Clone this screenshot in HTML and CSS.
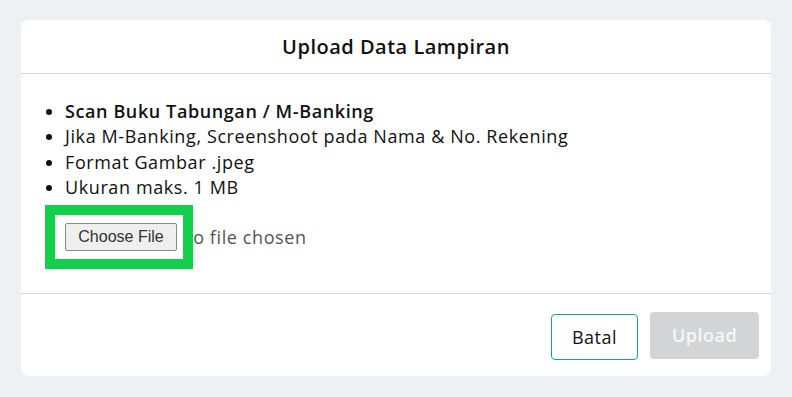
FILE: index.html
```html
<!DOCTYPE html>
<html lang="en">
<head>
    <meta charset="UTF-8">
    <meta name="viewport" content="width=device-width, initial-scale=1.0">
    <title>Upload Data Lampiran</title>
    <link rel="stylesheet" href="styles.css">
</head>
<body>
    <div class="modal">
        <div class="modal-header">
            <h2>Upload Data Lampiran</h2>
        </div>

        <div class="modal-body">
            <ul class="notes">
                <li><strong>Scan Buku Tabungan / M-Banking</strong></li>
                <li>Jika M-Banking, Screenshoot pada Nama &amp; No. Rekening</li>
                <li>Format Gambar .jpeg</li>
                <li>Ukuran maks. 1 MB</li>
            </ul>

            <div class="file-row">
                <div class="highlight">
                    <span class="file-btn">Choose File</span>
                </div>
                <span class="file-name">No file chosen</span>
            </div>
        </div>

        <div class="modal-footer">
            <button class="btn btn-cancel">Batal</button>
            <button class="btn btn-upload" disabled>Upload</button>
        </div>
    </div>
</body>
</html>
```

FILE: styles.css
```css
body {
    font-family: "Open Sans", sans-serif;
    margin: 0;
    padding: 20px 21px;
    background-color: #eef1f4;
}

.modal {
    background-color: white;
    border-radius: 8px;
    height: 356px;
    display: flex;
    flex-direction: column;
}

.modal-header {
    height: 53px;
    border-bottom: 1px solid #d4d6d9;
    display: flex;
    align-items: center;
    justify-content: center;
}

.modal-header h2 {
    margin: 0;
    font-size: 20px;
    font-weight: 600;
    letter-spacing: 0.5px;
    color: #111;
}

.modal-body {
    flex: 1;
    padding: 25px 24px 0 23px;
    border-bottom: 1px solid #d4d6d9;
}

.notes {
    margin: 0;
    padding-left: 21px;
    font-size: 18px;
    letter-spacing: 0.6px;
    line-height: 25.3px;
    color: #111;
}

.notes strong {
    font-weight: 600;
}

/* file input look */
.file-row {
    display: flex;
    align-items: center;
    margin-top: 5px;
    margin-left: 1px;
}

.highlight {
    position: relative;
    z-index: 1;
    border: 10px solid #12d04b;
    background-color: white;
    padding: 8px 6px 8px 10px;
    margin-right: -14px;
}

.file-btn {
    display: block;
    width: 110px;
    height: 26px;
    line-height: 26px;
    text-align: center;
    font-family: "Liberation Sans", Arial, sans-serif;
    font-size: 16px;
    color: #333;
    background-color: #efefef;
    border: 1px solid #8a8a8a;
    border-radius: 2px;
}

.file-name {
    font-size: 18px;
    letter-spacing: 0.6px;
    color: #555;
}

.modal-footer {
    height: 82px;
    display: flex;
    align-items: center;
    justify-content: flex-end;
    gap: 12px;
    padding-right: 12px;
}

.btn {
    font-family: "Open Sans", sans-serif;
    font-size: 18px;
    letter-spacing: 0.5px;
    border-radius: 4px;
}

.btn-cancel {
    width: 87px;
    height: 46px;
    margin-top: 4px;
    background-color: white;
    color: #111;
    border: 1px solid #1aa385;
}

.btn-upload {
    width: 109px;
    height: 47px;
    background-color: #d3d4d6;
    color: #f5f7f8;
    border: none;
    font-weight: 600;
}
```
